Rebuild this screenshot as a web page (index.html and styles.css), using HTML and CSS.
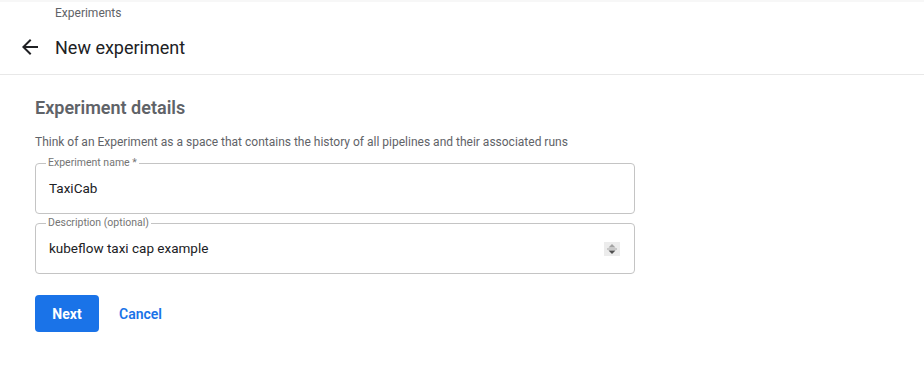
FILE: index.html
```html
<!DOCTYPE html>
<html lang="en">
<head>
    <meta charset="UTF-8">
    <title>New experiment</title>
    <link rel="stylesheet" href="styles.css">
</head>
<body>
    <div class="topstrip"></div>
    <div class="header">
        <div class="breadcrumb">Experiments</div>
        <div class="title-row">
            <svg class="back" width="24" height="24" viewBox="0 0 24 24">
                <path d="M20 11H7.83l5.59-5.59L12 4l-8 8 8 8 1.41-1.41L7.830 13H20v-2z" fill="#202124"/>
            </svg>
            <span class="page-title">New experiment</span>
        </div>
    </div>

    <div class="content">
        <h2>Experiment details</h2>
        <p class="hint">Think of an Experiment as a space that contains the history of all pipelines and their associated runs</p>

        <fieldset class="field">
            <legend>Experiment name *</legend>
            <div class="value">TaxiCab</div>
        </fieldset>

        <fieldset class="field">
            <legend>Description (optional)</legend>
            <div class="value">kubeflow taxi cap example</div>
            <svg class="spin" width="16" height="14" viewBox="0 0 16 14">
                <rect width="16" height="14" fill="#ececec"/>
                <path d="M4.5 5.5L8 2l3.5 3.5z" fill="#a3a3a3"/>
                <rect x="3" y="6.5" width="10" height="1" fill="#a3a3a3"/>
                <path d="M4.5 8.5h7L8 12z" fill="#505050"/>
            </svg>
        </fieldset>

        <div class="actions">
            <button class="btn-next">Next</button>
            <button class="btn-cancel">Cancel</button>
        </div>
    </div>
</body>
</html>
```

FILE: styles.css
```css
body {
    margin: 0;
    font-family: Roboto, "Noto Sans", sans-serif;
    background: #fff;
    color: #202124;
}
.topstrip {
    height: 2px;
    background: #f7f7f7;
}
.header {
    height: 73px;
    border-bottom: 1px solid #e8e8e8;
    box-sizing: border-box;
}
.breadcrumb {
    padding: 3px 0 0 55px;
    font-size: 12px;
    line-height: 16px;
    color: #5f6368;
}
.title-row {
    display: flex;
    align-items: center;
    height: 40px;
    margin-top: 6px;
}
.back {
    margin-left: 18px;
    margin-right: 13px;
}
.page-title {
    font-size: 18px;
    color: #202124;
}
.content {
    padding: 0 35px;
    width: 600px;
}
h2 {
    margin: 22px 0 0;
    font-size: 18px;
    line-height: 22px;
    font-weight: 600;
    color: #5f6368;
}
.hint {
    margin: 15px 0 7px;
    font-size: 12px;
    line-height: 16px;
    color: #5f6368;
}
.field {
    position: relative;
    margin: 0;
    padding: 0 13px;
    height: 57px;
    box-sizing: border-box;
    border: 1px solid #c4c4c4;
    border-radius: 4px;
    display: flex;
    align-items: center;
}
.field + .field {
    margin-top: 3px;
}
legend {
    margin-left: -3px;
    padding: 0 2px;
    font-size: 10.5px;
    line-height: 12px;
    color: #757575;
}
.value {
    font-size: 13.5px;
    margin-top: -6px;
    color: #202124;
}
.spin {
    position: absolute;
    right: 14px;
    top: 13px;
}
.actions {
    display: flex;
    align-items: center;
    margin-top: 21px;
}
.btn-next {
    width: 64px;
    height: 37px;
    border: none;
    border-radius: 4px;
    background: #1a73e8;
    color: #fff;
    font-family: inherit;
    font-size: 14px;
    font-weight: 700;
}
.btn-cancel {
    margin-left: 12px;
    padding: 0 8px;
    height: 37px;
    border: none;
    background: none;
    color: #1a73e8;
    font-family: inherit;
    font-size: 14px;
    font-weight: 600;
}
```
